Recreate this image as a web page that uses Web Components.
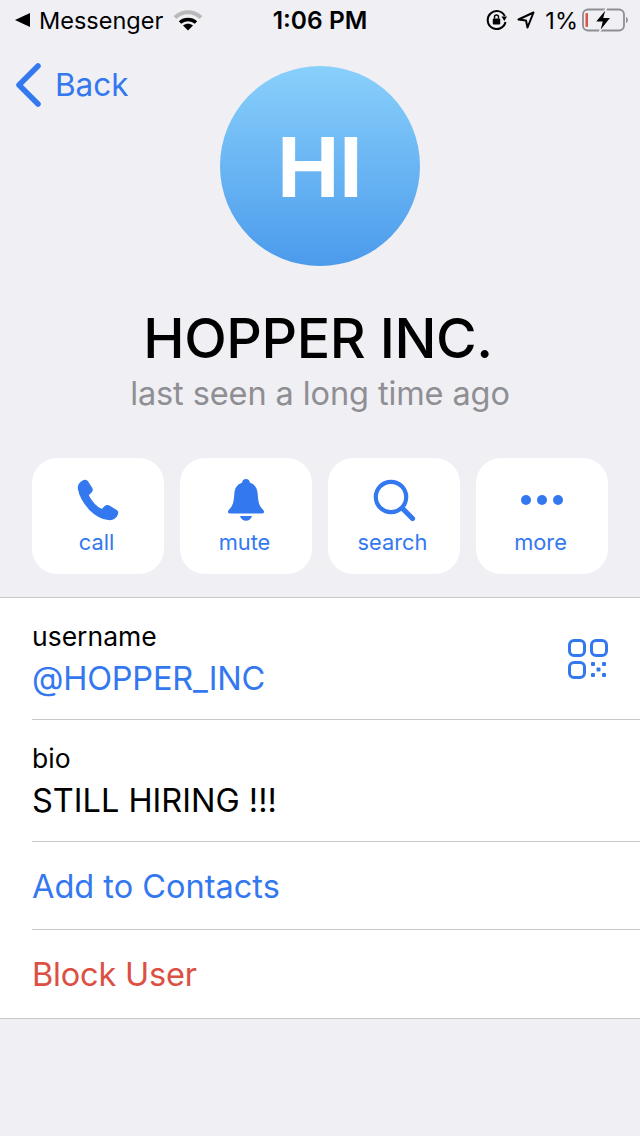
<!DOCTYPE html>
<html>
<head>
<meta charset="utf-8">
<title>HOPPER INC.</title>
<style>
html, body { margin: 0; padding: 0; background: #efeff4; }
body { width: 640px; height: 1136px; overflow: hidden; font-family: Inter, "Noto Sans", sans-serif; color: #000; }
</style>
</head>
<body>
<profile-page>
  <status-bar></status-bar>
  <profile-header name="HOPPER INC." status="last seen a long time ago" initials="HI"></profile-header>
  <action-bar>
    <action-button label="call" icon="call"></action-button>
    <action-button label="mute" icon="mute"></action-button>
    <action-button label="search" icon="search"></action-button>
    <action-button label="more" icon="more"></action-button>
  </action-bar>
  <info-list>
    <info-row label="username" value="@HOPPER_INC" tone="link" qr></info-row>
    <info-row label="bio" value="STILL HIRING !!!"></info-row>
    <action-row tone="link">Add to Contacts</action-row>
    <action-row tone="danger" last>Block User</action-row>
  </info-list>
</profile-page>

<script>
const BLUE = "#3478f0";

const ICONS = {
  call: `<svg width="44" height="44" viewBox="0 0 44 44"><path transform="translate(2.500 2.500) scale(1.110) translate(-3.500 -2.200)" fill="${BLUE}" stroke="${BLUE}" stroke-width="1.200" stroke-linejoin="round" d="M3.5 9.5C3 6.5 5 3.6 8.3 2.4c1.4-.5 2.6-.2 3.4 1l3.6 5.6c.8 1.3.6 2.5-.4 3.5l-2 2c-.6.6-.7 1.2-.3 2 1.200 2.400 3 5 5.200 7.200 2.200 2.200 3.800 3.300 5.700 4.300.8.400 1.400.300 2-.3l1.800-1.900c1.100-1.100 2.400-1.300 3.700-.5l6.300 3.800c1.400.8 1.700 2.100 1.100 3.500-1.200 3.100-4.300 5-7.700 4.700-6-.5-12-4-17.500-9.500C9 22.900 4.500 15.800 3.500 9.500z"/></svg>`,
  mute: `<svg width="44" height="44" viewBox="0 0 44 44"><path transform="translate(22 1) scale(1.08 1.13) translate(-22 -1.500)" fill="${BLUE}" d="M22 1.500c2 0 3.500 1.400 3.700 3.300 4.500 1.300 6.800 5 7.100 9.700.4 6.500 1.300 10.300 3.700 12.800.9.900 2 1.800 2.200 2.900.2 1-.5 1.800-1.700 1.800H7c-1.200 0-1.900-.8-1.700-1.800.2-1.100 1.300-2 2.200-2.900 2.400-2.500 3.300-6.300 3.700-12.800.3-4.700 2.600-8.400 7.100-9.700.2-1.900 1.700-3.300 3.700-3.300z"/><path fill="${BLUE}" d="M16 38h12c-.8 3-3.200 4.700-6 4.700s-5.200-1.700-6-4.700z"/></svg>`,
  search: `<svg width="44" height="44" viewBox="0 0 44 44" fill="none" stroke="${BLUE}" stroke-width="4.200" stroke-linecap="round"><circle cx="19" cy="19" r="15.200"/><path d="M31 31l9.500 9.500" stroke-width="5.200"/></svg>`,
  more: `<svg width="44" height="44" viewBox="0 0 44 44" fill="${BLUE}"><circle cx="6" cy="22" r="5"/><circle cx="22" cy="22" r="5"/><circle cx="38" cy="22" r="5"/></svg>`
};

class ProfilePage extends HTMLElement {
  constructor() {
    super();
    this.attachShadow({ mode: "open" });
    this.shadowRoot.innerHTML = `
      <style>:host { display: flex; flex-direction: column; width: 640px; }</style>
      <slot></slot>`;
  }
}

class StatusBar extends HTMLElement {
  constructor() {
    super();
    this.attachShadow({ mode: "open" });
    this.shadowRoot.innerHTML = `
      <style>
        :host { display: grid; grid-template-columns: 1fr auto 1fr; align-items: center; height: 40px; padding: 0 12px; font-size: 23.500px; color: #000; }
        .left, .right { display: flex; align-items: center; }
        .right { justify-content: flex-end; }
        .time { font-weight: 600; font-size: 24.500px; }
        .back { margin: 0 9px 0 3px; }
        .wifi { margin-left: 10px; }
        .lock { margin-right: 9px; }
        .arrow { margin-right: 10px; }
        .pct { margin-right: 4px; }
      </style>
      <div class="left">
        <svg class="back" width="15" height="14" viewBox="0 0 15 14"><path d="M15 0v14L0 7z"/></svg>
        <span>Messenger</span>
        <svg class="wifi" width="30" height="22" viewBox="0 0 30 22" fill="none" stroke-linecap="butt">
          <path d="M2 8.500C9.500 1.500 20.500 1.500 28 8.500" stroke="#b9b9bc" stroke-width="4"/>
          <path d="M7 13.500c4.500-4 11.500-4 16 0" stroke="#000" stroke-width="3.600"/>
          <path d="M15 21.500l-5-5c2.800-2.400 7.200-2.400 10 0z" fill="#000"/>
        </svg>
      </div>
      <div class="time">1:06 PM</div>
      <div class="right">
        <svg class="lock" width="22" height="22" viewBox="0 0 22 22" fill="none" stroke="#000" stroke-width="2">
          <path d="M18.800 7A9 9 0 1 0 19.500 13"/>
          <path d="M15.500 7.500h5.500L18.300 12z" fill="#000" stroke="none"/>
          <rect x="6.800" y="9.500" width="7.400" height="6" rx="1" fill="#000" stroke="none"/>
          <path d="M8.500 9.500V8a2 2 0 0 1 4 0v1.500" stroke-width="1.400"/>
        </svg>
        <svg class="arrow" width="18" height="18" viewBox="0 0 18 18" fill="none" stroke="#000" stroke-width="2" stroke-linejoin="round"><path d="M16.500 1.500L1.500 8.500l7.500 1 1.500 7z"/></svg>
        <span class="pct">1%</span>
        <svg width="46" height="24" viewBox="0 0 46 24">
          <rect x="1" y="1.500" width="41" height="21" rx="5" fill="none" stroke="#8e8e92" stroke-width="1.800"/>
          <rect x="3.500" y="5" width="2.500" height="14" rx="1" fill="#d9534a"/>
          <path d="M44 9c1.200.4 1.800 1.500 1.800 3s-.6 2.600-1.800 3z" fill="#8e8e92"/>
          <path d="M24.500 0L13 14h7l-2.500 10L29 9.500h-7z" fill="#000" stroke="#efeff4" stroke-width="1.200"/>
        </svg>
      </div>`;
  }
}

class ProfileHeader extends HTMLElement {
  constructor() {
    super();
    this.attachShadow({ mode: "open" });
    this.shadowRoot.innerHTML = `
      <style>
        :host { display: grid; justify-items: center; }
        .back { grid-area: 1 / 1; justify-self: start; align-self: start; display: flex; align-items: center; gap: 14px; margin: 22px 0 0 16px; color: ${BLUE}; font-size: 31.500px; line-height: 46px; }
        .avatar { grid-area: 1 / 1; margin-top: 26px; width: 200px; height: 200px; box-sizing: border-box; padding-top: 3px; border-radius: 50%; background: linear-gradient(#89d0fb, #4b9bec); display: flex; align-items: center; justify-content: center; color: #fff; font-size: 83px; font-weight: 700; line-height: 1; }
        .name { margin: 39px 4px 0 0; font-size: 55.500px; line-height: 66px; font-weight: 500; letter-spacing: -0.400px; }
        .status { font-size: 32.500px; line-height: 46px; color: #8e8e93; letter-spacing: -0.100px; }
      </style>
      <div class="back">
        <svg width="25" height="44" viewBox="0 0 25 44" fill="none" stroke="${BLUE}" stroke-width="5.500" stroke-linecap="round" stroke-linejoin="round"><path d="M22 3L3 22l19 19"/></svg>
        <span>Back</span>
      </div>
      <div class="avatar">${this.getAttribute("initials")}</div>
      <div class="name">${this.getAttribute("name")}</div>
      <div class="status">${this.getAttribute("status")}</div>`;
  }
}

class ActionBar extends HTMLElement {
  constructor() {
    super();
    this.attachShadow({ mode: "open" });
    this.shadowRoot.innerHTML = `
      <style>:host { display: grid; grid-template-columns: repeat(4, 132px); gap: 16px; padding: 0 32px; margin-top: 41px; }</style>
      <slot></slot>`;
  }
}

class ActionButton extends HTMLElement {
  constructor() {
    super();
    this.attachShadow({ mode: "open" });
    this.shadowRoot.innerHTML = `
      <style>
        :host { display: flex; flex-direction: column; align-items: center; height: 116px; box-sizing: border-box; padding-top: 20px; background: #fff; border-radius: 25px; color: ${BLUE}; font-size: 21.800px; }
        .label { margin: 5px 3px 0 0; line-height: 30px; }
        svg { display: block; }
      </style>
      ${ICONS[this.getAttribute("icon")]}
      <div class="label">${this.getAttribute("label")}</div>`;
  }
}

class InfoList extends HTMLElement {
  constructor() {
    super();
    this.attachShadow({ mode: "open" });
    this.shadowRoot.innerHTML = `
      <style>:host { display: block; margin-top: 23px; background: #fff; border-top: 1px solid #c8c8cc; border-bottom: 1px solid #c8c8cc; padding-left: 32px; }</style>
      <slot></slot>`;
  }
}

class InfoRow extends HTMLElement {
  constructor() {
    super();
    this.attachShadow({ mode: "open" });
    const qr = this.hasAttribute("qr") ? `
      <svg class="qr" width="40" height="40" viewBox="0 0 40 40" fill="none" stroke="${BLUE}" stroke-width="3">
        <rect x="1.500" y="1.500" width="15" height="15" rx="4.500"/>
        <rect x="23.500" y="1.500" width="15" height="15" rx="4.500"/>
        <rect x="1.500" y="23.500" width="15" height="15" rx="4.500"/>
        <g fill="${BLUE}" stroke="none">
          <rect x="23" y="23" width="4" height="4" rx="1"/><rect x="34" y="23" width="4" height="4" rx="1"/>
          <rect x="28.500" y="28.500" width="4" height="4" rx="1"/>
          <rect x="23" y="34" width="4" height="4" rx="1"/><rect x="34" y="34" width="4" height="4" rx="1"/>
        </g>
      </svg>` : "";
    this.shadowRoot.innerHTML = `
      <style>
        :host { display: flex; align-items: center; justify-content: space-between; box-sizing: border-box; height: 122px; padding-right: 32px; border-bottom: 1px solid #c8c8cc; }
        .text { padding-top: 1px; }
        .label { font-size: 26.500px; line-height: 36px; }
        .value { font-size: 32.500px; line-height: 44px; margin-top: 3px; }
        .link { color: ${BLUE}; letter-spacing: -0.200px; }
      </style>
      <div class="text">
        <div class="label">${this.getAttribute("label")}</div>
        <div class="value ${this.getAttribute("tone") || ""}">${this.getAttribute("value")}</div>
      </div>
      ${qr}`;
  }
}

class ActionRow extends HTMLElement {
  constructor() {
    super();
    this.attachShadow({ mode: "open" });
    const danger = this.getAttribute("tone") === "danger";
    const border = this.hasAttribute("last") ? "none" : "1px solid #c8c8cc";
    this.shadowRoot.innerHTML = `
      <style>
        :host { display: flex; align-items: center; box-sizing: border-box; height: 88px; padding-top: ${danger ? 0 : 2}px; color: ${danger ? "#dc5044" : BLUE}; font-size: 32.500px; letter-spacing: ${danger ? -0.2 : 0}px; border-bottom: ${border}; }
      </style>
      <slot></slot>`;
  }
}

customElements.define("profile-page", ProfilePage);
customElements.define("status-bar", StatusBar);
customElements.define("profile-header", ProfileHeader);
customElements.define("action-bar", ActionBar);
customElements.define("action-button", ActionButton);
customElements.define("info-list", InfoList);
customElements.define("info-row", InfoRow);
customElements.define("action-row", ActionRow);
</script>
</body>
</html>
